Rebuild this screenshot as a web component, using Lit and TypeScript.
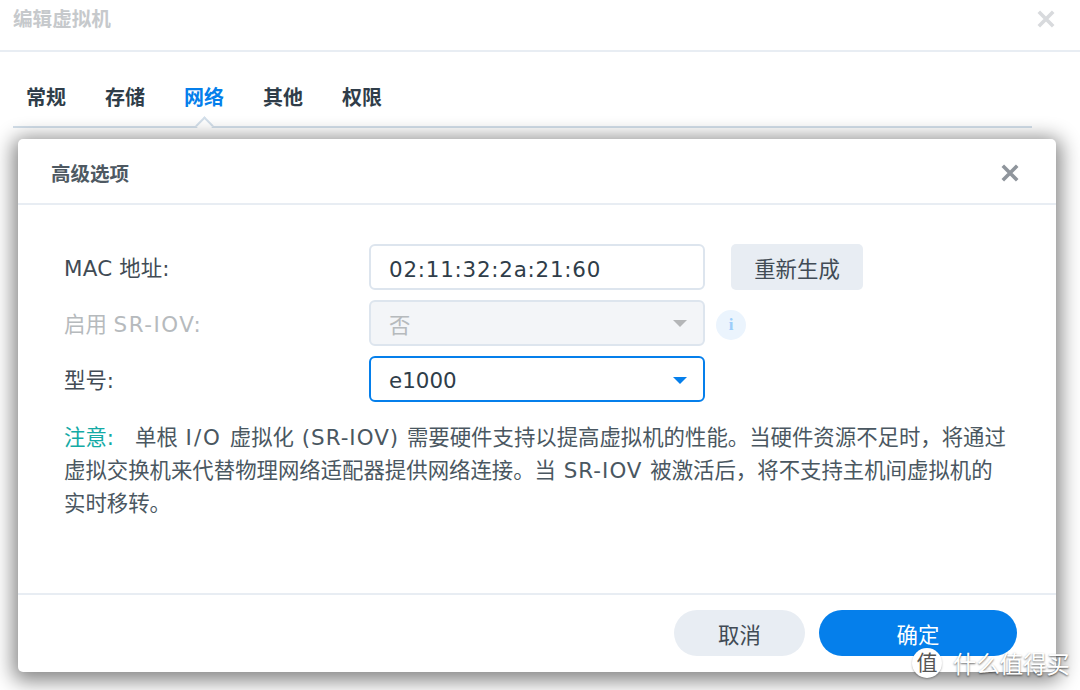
import { LitElement, css, html } from 'lit';
import { customElement } from 'lit/decorators.js';

const closeIcon = html`<svg viewBox="0 0 18 18" width="18" height="18"><path d="M1.8 1.8 16.2 16.2M16.2 1.8 1.8 16.2" fill="none" stroke="currentColor" stroke-width="3.6"/></svg>`;

@customElement('app-root')
export class AppRoot extends LitElement {
    static styles = css`
        :host {
            display: block;
            position: relative;
            width: 1080px;
            height: 690px;
            overflow: hidden;
            background: #fff;
            font-family: "DejaVu Sans", "Noto Sans CJK SC", sans-serif;
            color: #414b55;
        }

        .back-title {
            height: 52px;
            box-sizing: border-box;
            padding: 0 25px 15px 13px;
            display: flex;
            align-items: center;
            justify-content: space-between;
            border-bottom: 2px solid #e8edf3;
            font-size: 19.6px;
            font-weight: 700;
            color: #c6c9cc;
        }

        .back-title svg { color: #d8dadd; display: block; margin-top: 2px; }

        .tabs {
            margin: 23px 48px 0 13px;
            padding-left: 13px;
            height: 53px;
            display: flex;
            gap: 39px;
            border-bottom: 2px solid #d3dfea;
            font-size: 20px;
            font-weight: 700;
            color: #2f3d49;
            box-sizing: border-box;
            line-height: 46px;
        }

        .tab { position: relative; }
        .tab.on { color: #057feb; }

        .tab.on::after {
            content: "";
            position: absolute;
            left: 13.5px;
            bottom: -6px;
            width: 13px;
            height: 13px;
            background: #fff;
            border-top: 2px solid #d3dfea;
            border-left: 2px solid #d3dfea;
            box-sizing: border-box;
            transform: rotate(45deg);
        }

        .dialog {
            position: absolute;
            left: 18px;
            top: 139px;
            width: 1038px;
            height: 533px;
            background: #fff;
            border-radius: 5px;
            box-shadow: 0 4px 20px 5px rgba(0, 0, 0, 0.48);
            display: flex;
            flex-direction: column;
        }

        .head {
            height: 66px;
            flex: none;
            box-sizing: border-box;
            padding: 2px 37px 0 33px;
            display: flex;
            align-items: center;
            justify-content: space-between;
            border-bottom: 2px solid #e8edf3;
            font-size: 19.5px;
            font-weight: 700;
            color: #4e5962;
        }

        .head svg { color: #8f959c; display: block; margin-top: 1px; }

        .body {
            flex: 1;
            padding: 39px 45px 0 46px;
            font-size: 21.4px;
        }

        .row {
            display: grid;
            grid-template-columns: 305px 336px auto;
            align-items: center;
            height: 46px;
            margin-bottom: 10px;
        }

        .label { padding-bottom: 2px; }
        .label.off { color: #b6babd; }

        .mac { letter-spacing: 0.3px; }
        .latin { letter-spacing: 1.5px; }

        .field {
            height: 46px;
            box-sizing: border-box;
            border: 2px solid #dde5ee;
            border-radius: 6px;
            padding: 0 16px 0 18px;
            display: flex;
            align-items: center;
            justify-content: space-between;
            color: #2f3d49;
        }

        .field.text { padding-top: 4px; letter-spacing: 0.78px; }
        .field.off { background: #f3f5f8; color: #b6babd; }
        .field.focus { border-color: #057feb; letter-spacing: 0; padding-top: 2px; }

        .caret {
            width: 0;
            height: 0;
            border-left: 7px solid transparent;
            border-right: 7px solid transparent;
            border-top: 7px solid #b4b6b8;
        }

        .focus .caret { border-top-color: #057feb; }

        .regen {
            margin-left: 26px;
            width: 132px;
            height: 46px;
            border-radius: 5px;
            background: #e8edf3;
            display: flex;
            align-items: center;
            justify-content: center;
            color: #414b55;
        }

        .info {
            margin: 4px 0 0 11px;
            width: 30px;
            height: 30px;
            border-radius: 50%;
            background: #ebf4fd;
            color: #9ccdfa;
            display: flex;
            align-items: center;
            justify-content: center;
            font: 700 17px "Liberation Serif", serif;
        }

        .note {
            margin: 19px 0 0;
            line-height: 33px;
            color: #4a5761;
            font-size: 21.4px;
        }

        .note b { font-weight: 400; color: #14aaa5; margin-right: 21px; }
        .note .io { letter-spacing: 2px; margin: 0 1px; }
        .note .sr { letter-spacing: 1px; margin: 0 1px; }

        .foot {
            flex: none;
            height: 79px;
            border-top: 2px solid #e8edf3;
            display: flex;
            justify-content: flex-end;
            gap: 14px;
            padding: 15px 39px 0 0;
            box-sizing: border-box;
            font-size: 21.4px;
        }

        .btn {
            height: 46px;
            border-radius: 23px;
            display: flex;
            align-items: center;
            justify-content: center;
        }

        .btn.cancel { width: 131px; background: #e8edf3; color: #414b55; }
        .btn.ok { width: 198px; background: #057feb; color: #fff; }

        .mark {
            position: absolute;
            left: 912px;
            top: 646px;
            display: flex;
            align-items: center;
            gap: 11px;
            color: #fff;
            font-size: 23.4px;
            text-shadow: 0 1px 2px rgba(0, 0, 0, 0.6);
            white-space: nowrap;
        }

        .seal {
            width: 30px;
            height: 30px;
            border-radius: 50%;
            background: #fff;
            box-shadow: 0 1px 2px rgba(0, 0, 0, 0.3);
            color: #555;
            text-shadow: none;
            font-size: 21px;
            line-height: 30px;
            text-align: center;
        }
    `;

    render() {
        return html`
            <div class="back-title"><span>编辑虚拟机</span>${closeIcon}</div>
            <div class="tabs">
                <span class="tab">常规</span>
                <span class="tab">存储</span>
                <span class="tab on">网络</span>
                <span class="tab">其他</span>
                <span class="tab">权限</span>
            </div>
            <div class="dialog">
                <div class="head"><span>高级选项</span>${closeIcon}</div>
                <div class="body">
                    <div class="row">
                        <span class="label"><span class="mac">MAC</span> 地址:</span>
                        <div class="field text">02:11:32:2a:21:60</div>
                        <div class="regen">重新生成</div>
                    </div>
                    <div class="row">
                        <span class="label off">启用 <span class="latin">SR-IOV:</span></span>
                        <div class="field off">否<i class="caret"></i></div>
                        <div class="info">i</div>
                    </div>
                    <div class="row">
                        <span class="label">型号:</span>
                        <div class="field text focus">e1000<i class="caret"></i></div>
                    </div>
                    <p class="note"><b>注意:</b>单根 <span class="io">I/O</span> 虚拟化 <span class="sr">(SR-IOV)</span> 需要硬件支持以提高虚拟机的性能。当硬件资源不足时，将通过虚拟交换机来代替物理网络适配器提供网络连接。当 <span class="sr">SR-IOV</span> 被激活后，将不支持主机间虚拟机的实时移转。</p>
                </div>
                <div class="foot">
                    <div class="btn cancel">取消</div>
                    <div class="btn ok">确定</div>
                </div>
            </div>
            <div class="mark"><span class="seal">值</span><span>什么值得买</span></div>
        `;
    }
}
